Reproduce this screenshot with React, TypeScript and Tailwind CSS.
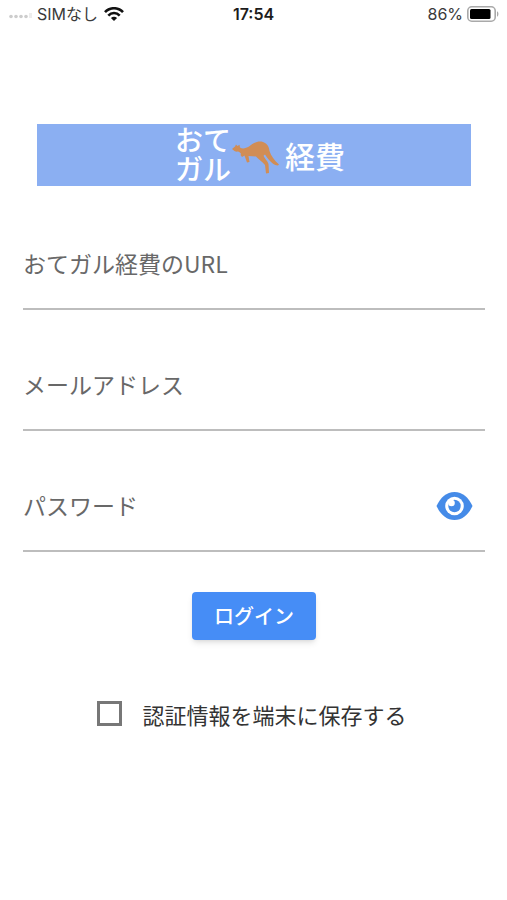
import { useState } from "react";

type FieldProps = {
  label: string;
  type: string;
  name: string;
  children?: React.ReactNode;
};

function StatusBar() {
  return (
    <header className="flex h-7 items-center px-2 text-[16px] leading-5 text-[#3a3a3a]">
      <div className="flex flex-1 items-center">
        <svg className="mt-1 h-1.5 w-7" viewBox="0 0 28 6" fill="#cdcdcd" aria-hidden="true">
          <circle cx="3" cy="3.500" r="1.800" />
          <circle cx="8" cy="3.500" r="1.800" />
          <circle cx="13" cy="3.500" r="1.800" />
          <circle cx="18" cy="3.500" r="1.800" />
          <path d="M21 0h3v5h-3z" fill="#ededed" />
        </svg>
        <span className="ml-px">SIMなし</span>
        <svg className="ml-1.5 h-[14px] w-5" viewBox="0 0 20 14" fill="none" stroke="#111" strokeWidth="2.6" aria-hidden="true">
          <path d="M1 5.2C6-.1 14-.1 19 5.2" />
          <path d="M4.3 8.6c3.2-3.4 8.2-3.4 11.4 0" />
          <path d="M10 14 6.9 10.9c1.7-1.7 4.5-1.7 6.2 0Z" fill="#111" stroke="none" />
        </svg>
      </div>
      <time className="font-semibold text-[#1c1c1c]">17:54</time>
      <div className="flex flex-1 items-center justify-end gap-1">
        <span>86%</span>
        <svg className="h-4 w-8" viewBox="0 0 32 16" aria-hidden="true">
          <rect x="0.8" y="0.8" width="27.4" height="14.4" rx="4" fill="#fff" stroke="#a9a9a9" strokeWidth="1.6" />
          <rect x="3" y="3" width="20.5" height="10" rx="1.5" fill="#000" />
          <path d="M30 5.3c1.9.6 1.9 4.8 0 5.4Z" fill="#a9a9a9" />
        </svg>
      </div>
    </header>
  );
}

function Logo() {
  return (
    <h1 className="mx-[14px] flex h-[62px] items-center justify-center bg-[#8baff2] pl-3 font-medium text-white">
      <span className="flex flex-col pb-0.5 text-[28px] leading-[29px]">
        <span>おて</span>
        <span>ガル</span>
      </span>
      <svg className="h-10 w-[50px]" viewBox="0 0 50 40" fill="#d18d55" aria-hidden="true">
        <path d="M1 14 4 11.5 5 9.5 6.5 11 8.5 9.8 9 12.5C12 14.3 15 13 18 11.5 22 8 27 5.500 32 7 36.500 8.500 38 12 38.500 16 40 20.500 43 25 48 29.500 47 31 45 30.500 42 28.800 39 26.500 36 22.500 34 19.500L32.500 20.800C34 24 36.500 26 37.500 29L38 38 35 38.500 34 30C31 26.500 27.500 24 25 21.500L17.500 21 18.500 27 16 27.500 13.500 20.500 11 22 9.500 20C10.500 18.500 9.500 17.500 7 16.500 5 17 3 16 1 14Z" />
      </svg>
      <span className="ml-1 text-[30px] leading-8">経費</span>
    </h1>
  );
}

function Field({ label, type, name, children }: FieldProps) {
  return (
    <div className="flex h-[121px] items-end border-b-2 border-[#bdbdbd] pb-5">
      <input
        type={type}
        name={name}
        aria-label={label}
        placeholder={label}
        className="h-[50px] min-w-0 flex-1 bg-transparent text-[23px] text-[#333] outline-none placeholder:text-[#686868]"
      />
      {children}
    </div>
  );
}

export default function App() {
  const [visible, setVisible] = useState(false);
  const [remember, setRemember] = useState(false);

  return (
    <div className="min-h-screen bg-white font-['Inter','Noto_Sans_CJK_JP',sans-serif]">
      <StatusBar />
      <main className="pt-24 pl-[23px] pr-[22px] font-['Noto_Sans_CJK_JP',sans-serif]">
        <Logo />
        <form className="flex flex-col pt-[3px]" onSubmit={(event) => event.preventDefault()}>
          <Field label="おてガル経費のURL" type="url" name="url" />
          <Field label="メールアドレス" type="email" name="email" />
          <Field label="パスワード" type={visible ? "text" : "password"} name="password">
            <button
              type="button"
              aria-label="パスワードを表示"
              aria-pressed={visible}
              onClick={() => setVisible(!visible)}
              className="mr-3 flex h-12 items-center"
            >
              <svg className="h-[30px] w-[37px]" viewBox="0 0 37 30" aria-hidden="true">
                <path d="M.5 15C4.500 6.500 10.500 1 18.500 1s14 5.500 18 14c-4 8.500-10 14-18 14S4.500 23.500.500 15Z" fill="#458be8" />
                <circle cx="18.500" cy="15" r="9.300" fill="#fff" />
                <circle cx="18.500" cy="15" r="6.200" fill="#458be8" />
                <circle cx="15.500" cy="12" r="3.300" fill="#fff" />
              </svg>
            </button>
          </Field>
          <button
            type="submit"
            className="mt-10 h-12 w-[124px] self-center rounded bg-[#468df6] text-[20px] font-medium text-white shadow-md"
          >
            ログイン
          </button>
          <label className="mt-[58px] flex items-center gap-5 self-center pr-1 text-[22px] leading-8 text-[#333]">
            <input
              type="checkbox"
              name="remember"
              checked={remember}
              onChange={() => setRemember(!remember)}
              className="mb-0.5 size-[25px] appearance-none border-3 border-[#777] bg-white checked:bg-[#468df6]"
            />
            認証情報を端末に保存する
          </label>
        </form>
      </main>
    </div>
  );
}
